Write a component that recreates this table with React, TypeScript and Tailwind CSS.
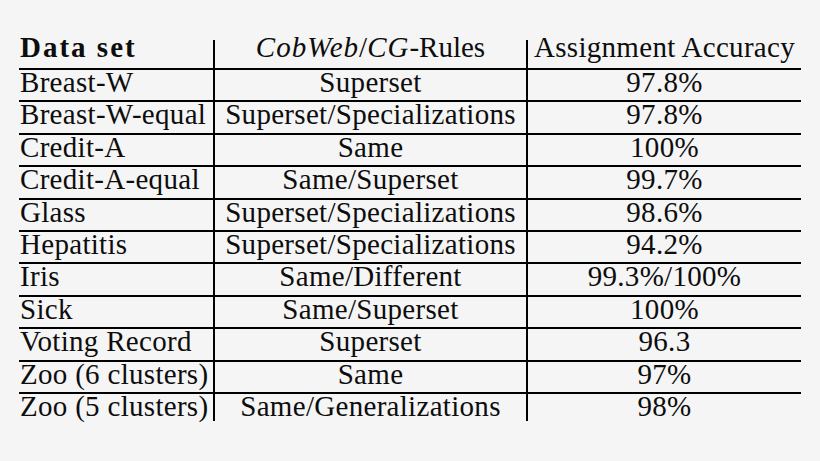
import React from 'react';

const rows: [string, string, string][] = [
  ['Breast-W', 'Superset', '97.8%'],
  ['Breast-W-equal', 'Superset/Specializations', '97.8%'],
  ['Credit-A', 'Same', '100%'],
  ['Credit-A-equal', 'Same/Superset', '99.7%'],
  ['Glass', 'Superset/Specializations', '98.6%'],
  ['Hepatitis', 'Superset/Specializations', '94.2%'],
  ['Iris', 'Same/Different', '99.3%/100%'],
  ['Sick', 'Same/Superset', '100%'],
  ['Voting Record', 'Superset', '96.3'],
  ['Zoo (6 clusters)', 'Same', '97%'],
  ['Zoo (5 clusters)', 'Same/Generalizations', '98%'],
];

export default function App() {
  return (
    <div className="w-[820px] h-[461px] bg-[#f5f5f5] pt-[40px] pl-[19px] text-[#0d0d0d] text-[29px] tracking-[0.3px] [font-family:'Liberation_Serif',serif] overflow-hidden">
      <div className="w-[782px] flex flex-col">
        {/* header */}
        <div className="grid grid-cols-[194px_313px_275px] h-[28px] leading-[15px]">
          <div className="pl-[1px] font-bold tracking-[2px]">Data set</div>
          <div className="border-l-2 border-black text-center tracking-normal">
            <i className="tracking-[1px]">CobWeb</i>/<i className="tracking-[1px]">CG</i>-Rules
          </div>
          <div className="border-l-2 border-black text-center">Assignment Accuracy</div>
        </div>

        {rows.map(([name, rule, acc], i) => (
          <div
            key={name}
            className={`grid grid-cols-[194px_313px_275px] border-t-2 border-black leading-[25px] ${
              i === rows.length - 1 ? 'h-[29px]' : 'h-[32.4px]'
            }`}
          >
            <div className="pl-[1px] whitespace-nowrap">{name}</div>
            <div className="border-l-2 border-black text-center whitespace-nowrap">{rule}</div>
            <div className="border-l-2 border-black text-center whitespace-nowrap">{acc}</div>
          </div>
        ))}
      </div>
    </div>
  );
}
